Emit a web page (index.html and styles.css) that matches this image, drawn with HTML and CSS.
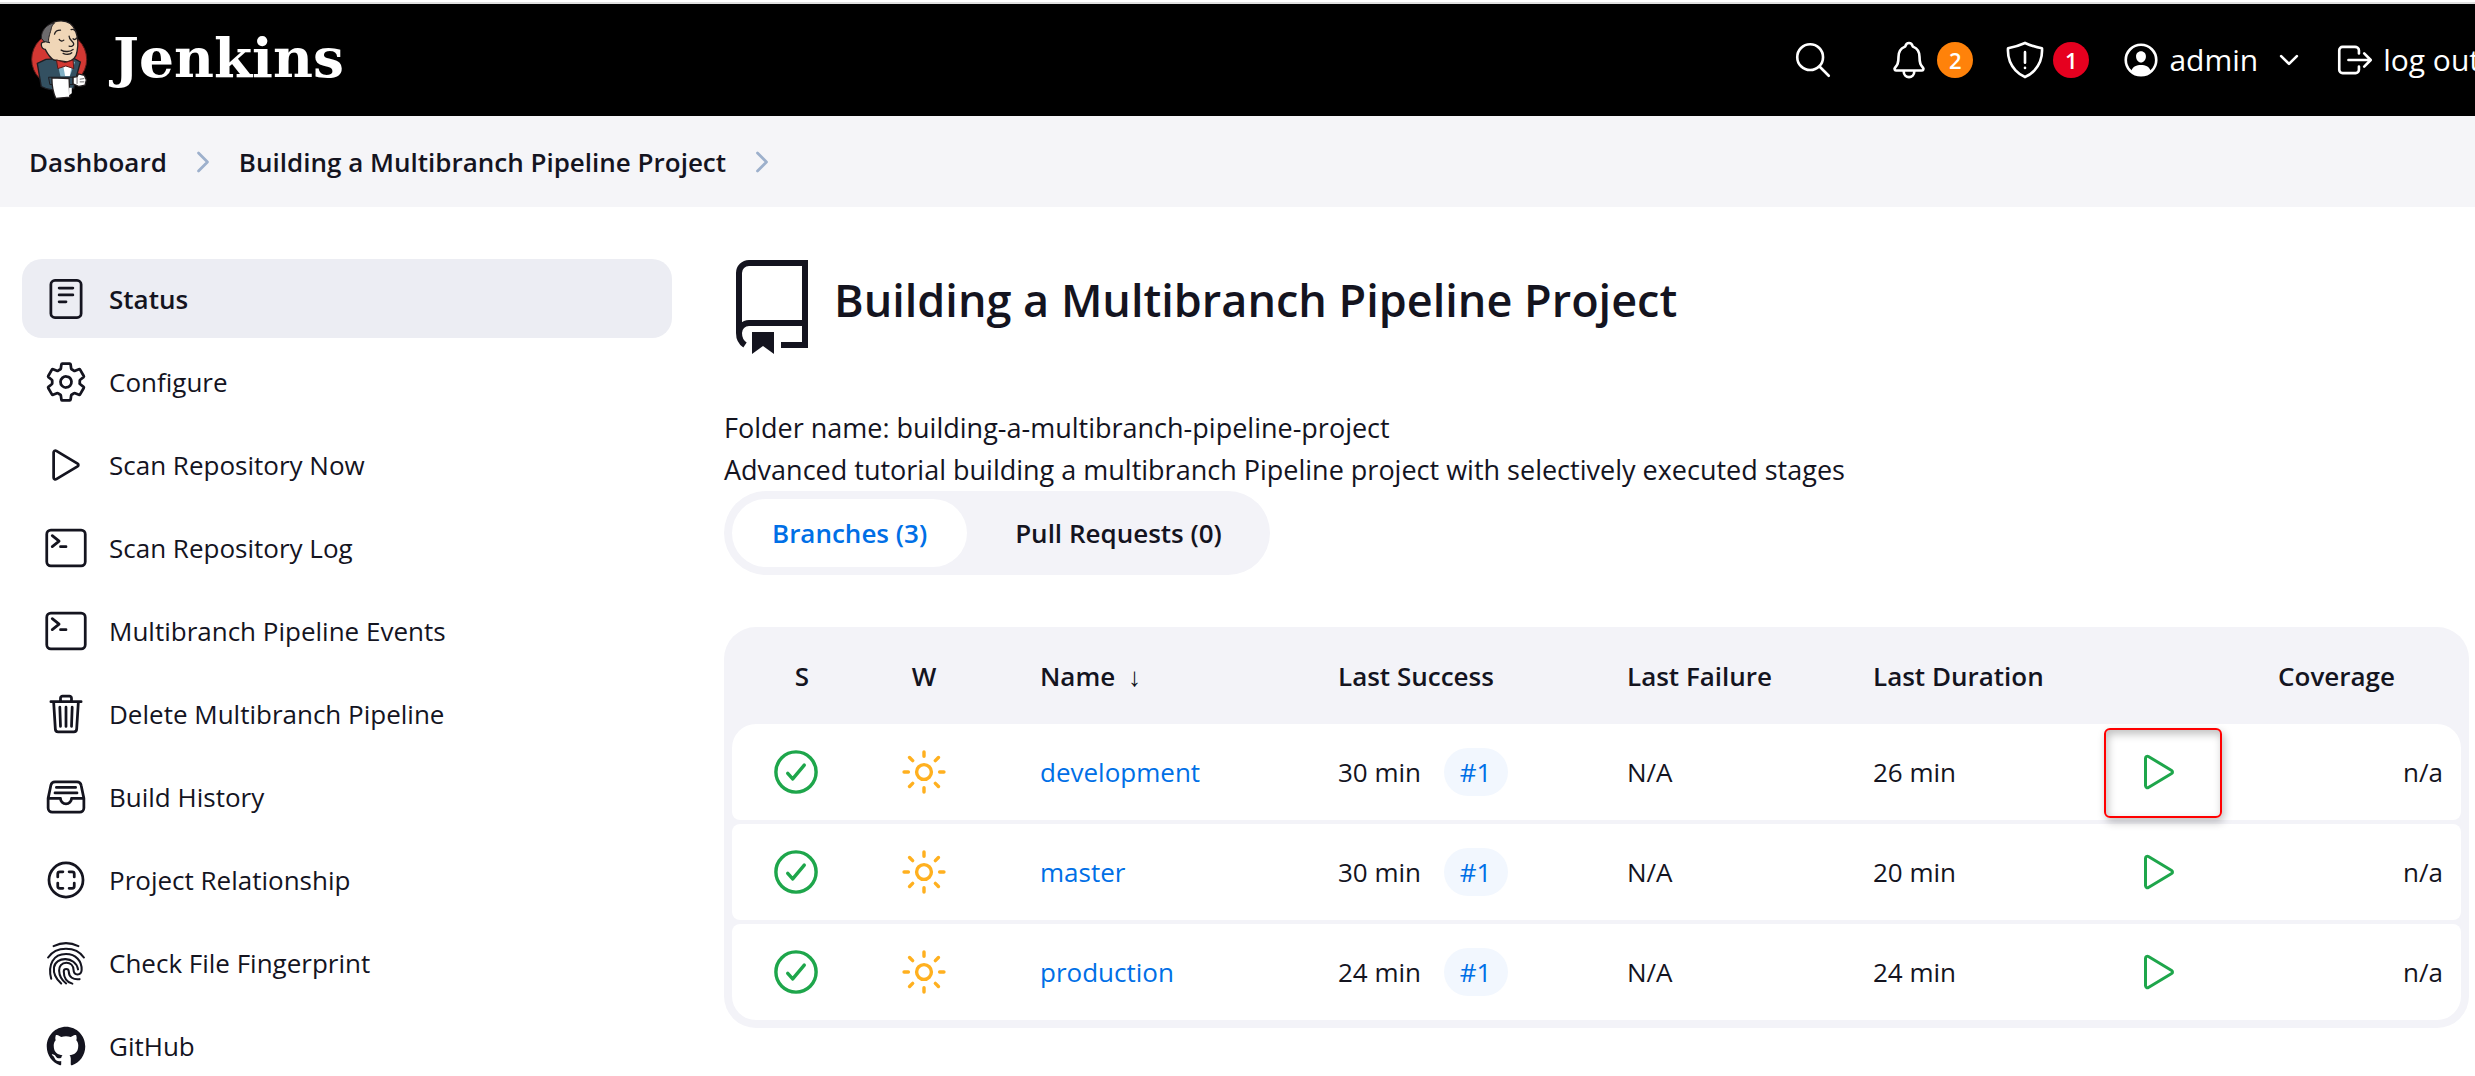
FILE: index.html
```html
<!DOCTYPE html>
<html lang="en">
  <head>
    <meta charset="utf-8" />
    <title>Building a Multibranch Pipeline Project [Jenkins]</title>
    <link rel="stylesheet" href="styles.css">
  </head>

  <body>
    <!-- shared symbols -->
    <svg class="symbols" aria-hidden="true">
      <symbol id="chevron" viewBox="0 0 512 512"><path d="M184 112l144 144-144 144" /></symbol>
      <symbol id="play" viewBox="0 0 512 512">
        <path d="M112 111v290c0 17.44 17 28.52 31 20.16l247.9-148.37c12.12-7.25 12.12-26.33 0-33.58L143 90.84c-14-8.36-31 2.72-31 20.16z" />
      </symbol>
      <symbol id="terminal" viewBox="0 0 512 512">
        <rect x="32" y="48" width="448" height="416" rx="48" />
        <path d="M96 112l80 64-80 64M192 240h64" />
      </symbol>
      <symbol id="success" viewBox="0 0 512 512">
        <circle cx="256" cy="256" r="234" />
        <path d="M352 176L217.6 336 160 272" />
      </symbol>
      <symbol id="sunny" viewBox="0 0 512 512">
        <circle cx="256" cy="256" r="86" />
        <path d="M256 24v50M256 438v50M24 256h50M438 256h50M88 88l36 36M388 388l36 36M88 424l36-36M388 124l36-36" />
      </symbol>
    </svg>

    <header class="page-header">
      <a class="brand" href="#">
        <svg class="brand-logo" viewBox="90 57 175 246" aria-hidden="true">
          <ellipse cx="178" cy="178" rx="83" ry="82" fill="#d33833" stroke="#5a1a18" stroke-width="3" />
          <path d="M138 178l-26 12 12 70c10 6 22 9 34 10l64-4 8-36 12-44-22-12z" fill="#335061" stroke="#1d1d22" stroke-width="4" />
          <path d="M172 186l10 44h28l16-44-22-6z" fill="#81b0c4" />
          <path d="M188 186l8 42h14l8-42z" fill="#fff" />
          <path d="M132 126c-12-2-10 20 4 22 6 12 12 24 26 32l40 6c18-4 28-14 30-32 4-20 2-44-4-60-8-22-24-32-44-32-30 0-52 20-54 44z" fill="#f0d6b7" stroke="#231f20" stroke-width="4" />
          <path d="M150 128c-8-2-2-20 0-28 6-16 2-20 14-32-24 4-40 22-40 46l8 10z" fill="#6d6b6d" stroke="#231f20" stroke-width="3" />
          <path d="M164 102c2-8 8-12 18-12M214 88c6-2 12 2 14 6M178 118c4 6 10 6 14 2M208 108c0 12 14 16 14 24 0 6-8 8-14 6M220 116c4 4 8 2 10-2M184 150c10 6 26 6 36-2M190 160c8 4 20 4 26-2" fill="none" stroke="#231f20" stroke-width="4" stroke-linecap="round" />
          <path d="M170 180l26 8 24-8 2 26-24-8-24 8z" fill="#d33833" stroke="#5a1a18" stroke-width="3" />
          <path d="M146 232h74v22h-70z" fill="#335061" stroke="#1d1d22" stroke-width="3" />
          <path d="M156 234l52 2 2 56-42 4c-8-18-12-40-12-62z" fill="#fff" stroke="#231f20" stroke-width="4" />
          <path d="M208 264h8v16l-8 6z" fill="#fff" />
          <path d="M220 232l12-2 4-8 18 4 6 14-4 16-18 4-18-8z" fill="#fff" stroke="#231f20" stroke-width="4" />
          <path d="M232 232v20M240 238l14-2M240 246h14" stroke="#231f20" stroke-width="2" />
        </svg>
        <span class="brand-name">Jenkins</span>
      </a>

      <nav class="header-actions">
        <button class="header-button header-search" aria-label="Search">
          <svg class="icon" viewBox="0 0 512 512"><path d="M221.09 64a157.09 157.09 0 10157.09 157.09A157.1 157.1 0 00221.09 64zM338.29 338.29L448 448" /></svg>
        </button>
        <button class="header-button" aria-label="Notifications">
          <svg class="icon" viewBox="0 0 512 512"><path d="M427.68 351.43C402 320 383.87 304 383.87 217.35 383.87 138 343.35 109.73 310 96c-4.43-1.82-8.6-6-9.95-10.55C294.2 65.54 277.8 48 256 48s-38.21 17.55-44 37.47c-1.35 4.6-5.52 8.71-9.95 10.53-33.39 13.75-73.87 41.92-73.87 121.35C128.13 304 110 320 84.32 351.43 73.68 364.45 83 384 101.61 384h308.88c18.51 0 27.77-19.61 17.19-32.57zM320 384v16a64 64 0 01-128 0v-16" /></svg>
          <span class="count count-warning">2</span>
        </button>
        <button class="header-button" aria-label="Security warnings">
          <svg class="icon" viewBox="0 0 512 512"><path d="M463.1 112.37C373.68 96.33 336.71 84.45 256 48c-80.71 36.45-117.68 48.33-207.1 64.37C32.7 369.13 240.58 457.79 256 464c15.42-6.21 223.3-94.87 207.1-351.63zM256 160v130M256 350v4" /></svg>
          <span class="count count-danger">1</span>
        </button>
        <a class="header-link header-user" href="#">
          <svg class="icon" viewBox="0 0 512 512">
            <circle cx="256" cy="256" r="186" />
            <path class="solid" d="M256 150c-36 0-62 28-60 66 2 40 28 70 60 70s58-30 60-70c2-38-24-66-60-66zM140 384c16-44 62-66 116-66s100 22 116 66c-30 34-70 54-116 54s-86-20-116-54z" />
          </svg>
          <span>admin</span>
        </a>
        <button class="header-button header-caret" aria-label="User menu">
          <svg class="icon" viewBox="0 0 512 512"><path d="M112 184l144 144 144-144" /></svg>
        </button>
        <a class="header-link" href="#">
          <svg class="icon" viewBox="0 0 512 512"><path d="M304 336v40a40 40 0 01-40 40H104a40 40 0 01-40-40V136a40 40 0 0140-40h152c22.09 0 48 17.91 48 40v40M368 336l80-80-80-80M176 256h256" /></svg>
          <span>log out</span>
        </a>
      </nav>
    </header>

    <nav class="breadcrumbs">
      <a href="#">Dashboard</a>
      <svg class="icon crumb-arrow"><use href="#chevron" /></svg>
      <a href="#">Building a Multibranch Pipeline Project</a>
      <svg class="icon crumb-arrow"><use href="#chevron" /></svg>
    </nav>

    <div class="page-body">
      <nav class="side-panel">
        <a class="task task-active" href="#">
          <svg class="icon" viewBox="0 0 512 512"><rect x="80" y="40" width="352" height="432" rx="48" /><path d="M176 128h160M176 208h160M176 288h80" /></svg>
          <span>Status</span>
        </a>
        <a class="task" href="#">
          <svg class="icon" viewBox="0 0 512 512"><path d="M262.29 192.31a64 64 0 1057.4 57.4 64.13 64.13 0 00-57.4-57.4zM416.39 256a154.34 154.34 0 01-1.53 20.79l45.21 35.46a10.81 10.81 0 012.45 13.75l-42.77 74a10.81 10.81 0 01-13.14 4.59l-44.9-18.08a16.11 16.11 0 00-15.17 1.75A164.48 164.48 0 01325 400.8a15.94 15.94 0 00-8.82 12.14l-6.73 47.89a11.08 11.08 0 01-10.68 9.17h-85.54a11.11 11.11 0 01-10.69-8.87l-6.72-47.82a16.07 16.07 0 00-9-12.22 155.3 155.3 0 01-21.46-12.57 16 16 0 00-15.11-1.71l-44.89 18.07a10.81 10.81 0 01-13.14-4.58l-42.77-74a10.8 10.8 0 012.45-13.75l38.21-30a16.05 16.05 0 006-14.08c-.36-4.17-.58-8.33-.58-12.5s.21-8.27.58-12.35a16 16 0 00-6.07-13.94l-38.19-30A10.81 10.81 0 0149.48 186l42.77-74a10.81 10.81 0 0113.14-4.59l44.9 18.08a16.11 16.11 0 0015.17-1.75A164.48 164.48 0 01187 111.2a15.94 15.94 0 008.82-12.14l6.73-47.89A11.08 11.08 0 01213.23 42h85.54a11.11 11.11 0 0110.69 8.87l6.72 47.82a16.07 16.07 0 009 12.22 155.3 155.3 0 0121.46 12.57 16 16 0 0015.11 1.71l44.89-18.07a10.81 10.81 0 0113.14 4.58l42.77 74a10.8 10.8 0 01-2.45 13.75l-38.21 30a16.05 16.05 0 00-6.05 14.08c.33 4.14.55 8.3.55 12.47z" /></svg>
          <span>Configure</span>
        </a>
        <a class="task" href="#">
          <svg class="icon"><use href="#play" /></svg>
          <span>Scan Repository Now</span>
        </a>
        <a class="task" href="#">
          <svg class="icon"><use href="#terminal" /></svg>
          <span>Scan Repository Log</span>
        </a>
        <a class="task" href="#">
          <svg class="icon"><use href="#terminal" /></svg>
          <span>Multibranch Pipeline Events</span>
        </a>
        <a class="task" href="#">
          <svg class="icon" viewBox="0 0 512 512"><path d="M112 112l20 320c.95 18.49 14.4 32 32 32h184c17.67 0 30.87-13.51 32-32l20-320M80 112h352M192 112V72a23.93 23.93 0 0124-24h80a23.93 23.93 0 0124 24v40M256 176v224M184 176l8 224M328 176l-8 224" /></svg>
          <span>Delete Multibranch Pipeline</span>
        </a>
        <a class="task" href="#">
          <svg class="icon" viewBox="0 0 512 512"><path d="M384 80H128c-26 0-43 14-48 40L48 272v112a48.14 48.14 0 0048 48h320a48.14 48.14 0 0048-48V272l-32-152c-5-27-23-40-48-40zM48 272h144M320 272h144M192 272a64 64 0 00128 0M144 144h224M128 208h256" /></svg>
          <span>Build History</span>
        </a>
        <a class="task" href="#">
          <svg class="icon" viewBox="0 0 512 512"><circle cx="256" cy="256" r="198" /><path d="M220 160h-36a24 24 0 00-24 24v36M292 160h36a24 24 0 0124 24v36M220 352h-36a24 24 0 01-24-24v-36M292 352h36a24 24 0 0024-24v-36" /></svg>
          <span>Project Relationship</span>
        </a>
        <a class="task" href="#">
          <svg class="icon icon-thin" viewBox="0 0 512 512">
            <path d="M112 60c90-44 198-44 288 0M48 192c92-136 324-136 416 0" />
            <path d="M84 440C40 270 112 152 256 152c116 0 186 84 182 186-4 68-92 70-94 0-2-52-36-84-84-84-56 0-86 42-84 92 2 66 34 112 82 148" />
            <path d="M200 494c-68-60-92-124-84-188 18-128 250-134 280 24" />
            <path d="M330 496c-66-18-100-70-100-142 0-38 56-38 58 0 2 66 52 100 126 90" />
          </svg>
          <span>Check File Fingerprint</span>
        </a>
        <a class="task" href="#">
          <svg class="icon" viewBox="0 0 512 512"><path class="solid" d="M256 32C132.3 32 32 134.9 32 261.7c0 101.5 64.2 187.5 153.2 217.9a17.56 17.56 0 003.8.4c8.3 0 11.5-6.1 11.5-11.4 0-5.5-.2-19.9-.3-39.1a102.4 102.4 0 01-22.6 2.7c-43.1 0-52.9-33.5-52.9-33.5-10.2-26.5-24.9-33.6-24.9-33.6-19.5-13.7-.1-14.1 1.4-14.1h.1c22.5 2 34.3 23.8 34.3 23.8 11.2 19.6 26.2 25.1 39.6 25.1a63 63 0 0025.6-6c2-14.8 7.8-24.9 14.2-30.7-49.7-5.8-102-25.5-102-113.5 0-25.1 8.7-45.6 23-61.6-2.3-5.8-10-29.2 2.2-60.8a18.64 18.64 0 015-.5c8.1 0 26.4 3.1 56.6 24.1a208.21 208.21 0 01112.2 0c30.2-21 48.5-24.1 56.6-24.1a18.64 18.64 0 015 .5c12.2 31.6 4.5 55 2.2 60.8 14.3 16.1 23 36.6 23 61.6 0 88.2-52.4 107.6-102.3 113.3 8 7.1 15.2 21.1 15.2 42.5 0 30.7-.3 55.5-.3 63 0 5.4 3.1 11.5 11.4 11.5a19.35 19.35 0 004-.4C415.9 449.2 480 363.1 480 261.7 480 134.9 379.7 32 256 32z" /></svg>
          <span>GitHub</span>
        </a>
      </nav>

      <main class="main-panel">
        <div class="title">
          <svg class="title-icon" viewBox="0 0 96 96" aria-hidden="true">
            <path d="M21 86q-6-4-6-12V14A10 10 0 0125 4H81V86H57M15 74a10 10 0 0110-10H81" />
            <path class="solid" d="M28 73h22v22l-11-8-11 8z" />
          </svg>
          <h1>Building a Multibranch Pipeline Project</h1>
        </div>

        <p class="description">
          Folder name: building-a-multibranch-pipeline-project<br />
          Advanced tutorial building a multibranch Pipeline project with selectively executed stages
        </p>

        <div class="tabs">
          <a class="tab tab-active" href="#">Branches (3)</a>
          <a class="tab" href="#">Pull Requests (0)</a>
        </div>

        <div class="table-wrap">
          <table>
            <colgroup>
              <col class="col-icon" />
              <col class="col-icon" />
              <col class="col-name" />
              <col class="col-success" />
              <col class="col-failure" />
              <col class="col-duration" />
              <col class="col-build" />
              <col />
            </colgroup>
            <thead>
              <tr>
                <th class="center">S</th>
                <th class="center">W</th>
                <th class="name">Name <span class="sort">↓</span></th>
                <th>Last Success</th>
                <th>Last Failure</th>
                <th>Last Duration</th>
                <th></th>
                <th class="coverage">Coverage</th>
              </tr>
            </thead>
            <tbody>
              <tr>
                <td class="center"><svg class="icon status"><use href="#success" /></svg></td>
                <td class="center"><svg class="icon weather"><use href="#sunny" /></svg></td>
                <td class="name"><a href="#">development</a></td>
                <td>30 min <a class="build" href="#">#1</a></td>
                <td>N/A</td>
                <td>26 min</td>
                <td class="center highlight"><button class="run" aria-label="Build development"><svg class="icon"><use href="#play" /></svg></button></td>
                <td class="coverage">n/a</td>
              </tr>
              <tr>
                <td class="center"><svg class="icon status"><use href="#success" /></svg></td>
                <td class="center"><svg class="icon weather"><use href="#sunny" /></svg></td>
                <td class="name"><a href="#">master</a></td>
                <td>30 min <a class="build" href="#">#1</a></td>
                <td>N/A</td>
                <td>20 min</td>
                <td class="center"><button class="run" aria-label="Build master"><svg class="icon"><use href="#play" /></svg></button></td>
                <td class="coverage">n/a</td>
              </tr>
              <tr>
                <td class="center"><svg class="icon status"><use href="#success" /></svg></td>
                <td class="center"><svg class="icon weather"><use href="#sunny" /></svg></td>
                <td class="name"><a href="#">production</a></td>
                <td>24 min <a class="build" href="#">#1</a></td>
                <td>N/A</td>
                <td>24 min</td>
                <td class="center"><button class="run" aria-label="Build production"><svg class="icon"><use href="#play" /></svg></button></td>
                <td class="coverage">n/a</td>
              </tr>
            </tbody>
          </table>
        </div>
      </main>
    </div>
  </body>
</html>
```

FILE: styles.css
```css
* {
  box-sizing: border-box;
}

html,
body {
  height: 100%;
  margin: 0;
  overflow: hidden;
}

body {
  padding-top: 2px;
  background-color: #fff;
  color: #14141f;
  font-family: 'Open Sans', 'Noto Sans', sans-serif;
  font-size: 26px;
  line-height: 42px;
}

a {
  color: #006fe6;
  text-decoration: none;
}

button {
  border: 0;
  padding: 0;
  background: none;
  color: inherit;
  font: inherit;
  cursor: pointer;
}

.symbols {
  display: none;
}

.icon {
  display: block;
  flex-shrink: 0;
  width: 44px;
  height: 44px;
  fill: none;
  stroke: currentColor;
  stroke-width: 32px;
  stroke-linecap: round;
  stroke-linejoin: round;
}

.icon-thin {
  stroke-width: 24px;
}

.solid {
  fill: currentColor;
  stroke: none;
}

/* header */

.page-header {
  display: flex;
  justify-content: space-between;
  height: 114px;
  padding-left: 30px;
  border-top: 2px solid #e0e0e0;
  background-color: #000;
  color: #fff;
  overflow: hidden;
}

.brand {
  display: flex;
  align-items: center;
  gap: 25px;
  color: #fff;
}

.brand-logo {
  width: 58px;
  height: 82px;
}

.brand-name {
  padding-bottom: 4px;
  font-family: 'DejaVu Serif', serif;
  font-size: 55px;
  font-weight: 700;
  line-height: 64px;
}

.header-actions {
  display: flex;
  align-items: center;
  gap: 31px;
  flex-shrink: 0;
  margin-right: -5px;
  font-size: 30px;
}

.header-actions .icon {
  width: 42px;
  height: 42px;
}

.header-button,
.header-link {
  display: flex;
  align-items: center;
  gap: 7px;
  color: #fff;
  white-space: nowrap;
}

.header-search {
  margin-right: 23px;
}

.header-actions .header-caret .icon {
  width: 28px;
  height: 28px;
  stroke-width: 48px;
}

.count {
  width: 36px;
  height: 36px;
  border-radius: 50%;
  font-size: 22px;
  font-weight: 600;
  line-height: 36px;
  text-align: center;
}

.count-warning {
  background-color: #ff820a;
}

.count-danger {
  background-color: #e6001f;
}

.header-user {
  margin-right: -14px;
}

/* breadcrumbs */

.breadcrumbs {
  display: flex;
  align-items: center;
  gap: 20px;
  height: 91px;
  padding: 0 29px;
  background-color: #f5f5f8;
}

.breadcrumbs a {
  color: #14141f;
  font-weight: 600;
}

.crumb-arrow {
  width: 32px;
  height: 32px;
  color: #9db0cc;
  stroke-width: 44px;
}

/* layout */

.page-body {
  display: grid;
  grid-template-columns: 650px minmax(0, 1fr);
  gap: 52px;
  padding: 52px 6px 0 22px;
}

.side-panel {
  display: flex;
  flex-direction: column;
  gap: 4px;
}

.task {
  display: flex;
  align-items: center;
  gap: 21px;
  height: 79px;
  padding: 0 22px;
  border-radius: 20px;
  color: #14141f;
}

.task-active {
  background-color: #ecedf3;
  font-weight: 600;
}

.title {
  display: flex;
  align-items: flex-start;
  gap: 14px;
  margin-bottom: 52px;
}

.title-icon {
  width: 96px;
  height: 96px;
  fill: none;
  stroke: currentColor;
  stroke-width: 6px;
}

h1 {
  margin: 0;
  font-size: 45px;
  font-weight: 600;
  line-height: 82px;
}

.description {
  margin: 0;
  font-size: 27px;
}

/* tabs */

.tabs {
  display: flex;
  gap: 8px;
  width: fit-content;
  padding: 8px;
  border-radius: 42px;
  background-color: #f3f3f8;
}

.tab {
  height: 68px;
  padding: 0 40px;
  border-radius: 34px;
  color: #14141f;
  font-weight: 600;
  line-height: 68px;
}

.tab-active {
  background-color: #fff;
  color: #006fe6;
}

/* branches table */

.table-wrap {
  margin-top: 52px;
  padding: 0 8px 4px;
  border-radius: 32px;
  background-color: #f3f3f8;
}

table {
  width: 100%;
  border-spacing: 0 4px;
  table-layout: fixed;
}

.col-icon {
  width: 128px;
}

.col-name {
  width: 326px;
}

.col-success {
  width: 289px;
}

.col-failure {
  width: 246px;
}

.col-duration {
  width: 245px;
}

.col-build {
  width: 130px;
}

th,
td {
  padding: 0 24px;
  text-align: left;
  white-space: nowrap;
}

th {
  height: 89px;
  font-weight: 600;
}

td {
  height: 96px;
  background-color: #fff;
}

tbody td:first-child {
  border-radius: 8px 0 0 8px;
}

tbody td:last-child {
  border-radius: 0 8px 8px 0;
}

tbody tr:first-child td:first-child {
  border-top-left-radius: 24px;
}

tbody tr:first-child td:last-child {
  border-top-right-radius: 24px;
}

tbody tr:last-child td:first-child {
  border-bottom-left-radius: 24px;
}

tbody tr:last-child td:last-child {
  border-bottom-right-radius: 24px;
}

.center {
  padding: 0;
  text-align: center;
}

th.center:first-child {
  padding-left: 12px;
}

.center .icon {
  margin: 0 auto;
}

.name {
  padding-left: 52px;
}

.sort {
  margin-left: 6px;
  font-weight: 400;
}

.coverage {
  padding-right: 18px;
  text-align: right;
}

th.coverage {
  padding-right: 66px;
}

.status {
  color: #1ea64b;
  stroke-width: 40px;
}

.weather {
  color: #ffb01f;
  stroke-width: 40px;
}

.build {
  display: inline-block;
  height: 48px;
  margin-left: 16px;
  padding: 0 16px;
  border-radius: 24px;
  background-color: #f2f7fe;
  line-height: 48px;
}

.run {
  display: inline-block;
  color: #1ea64b;
  vertical-align: middle;
}

.run .icon {
  width: 48px;
  height: 48px;
}

.highlight {
  position: relative;
}

.highlight::after {
  content: '';
  position: absolute;
  inset: 4px 2px 2px 10px;
  border: 2px solid #f00;
  border-radius: 6px;
  box-shadow: 2px 4px 8px rgba(0, 0, 0, 0.25), inset 2px 4px 8px rgba(0, 0, 0, 0.25);
  pointer-events: none;
}
```
